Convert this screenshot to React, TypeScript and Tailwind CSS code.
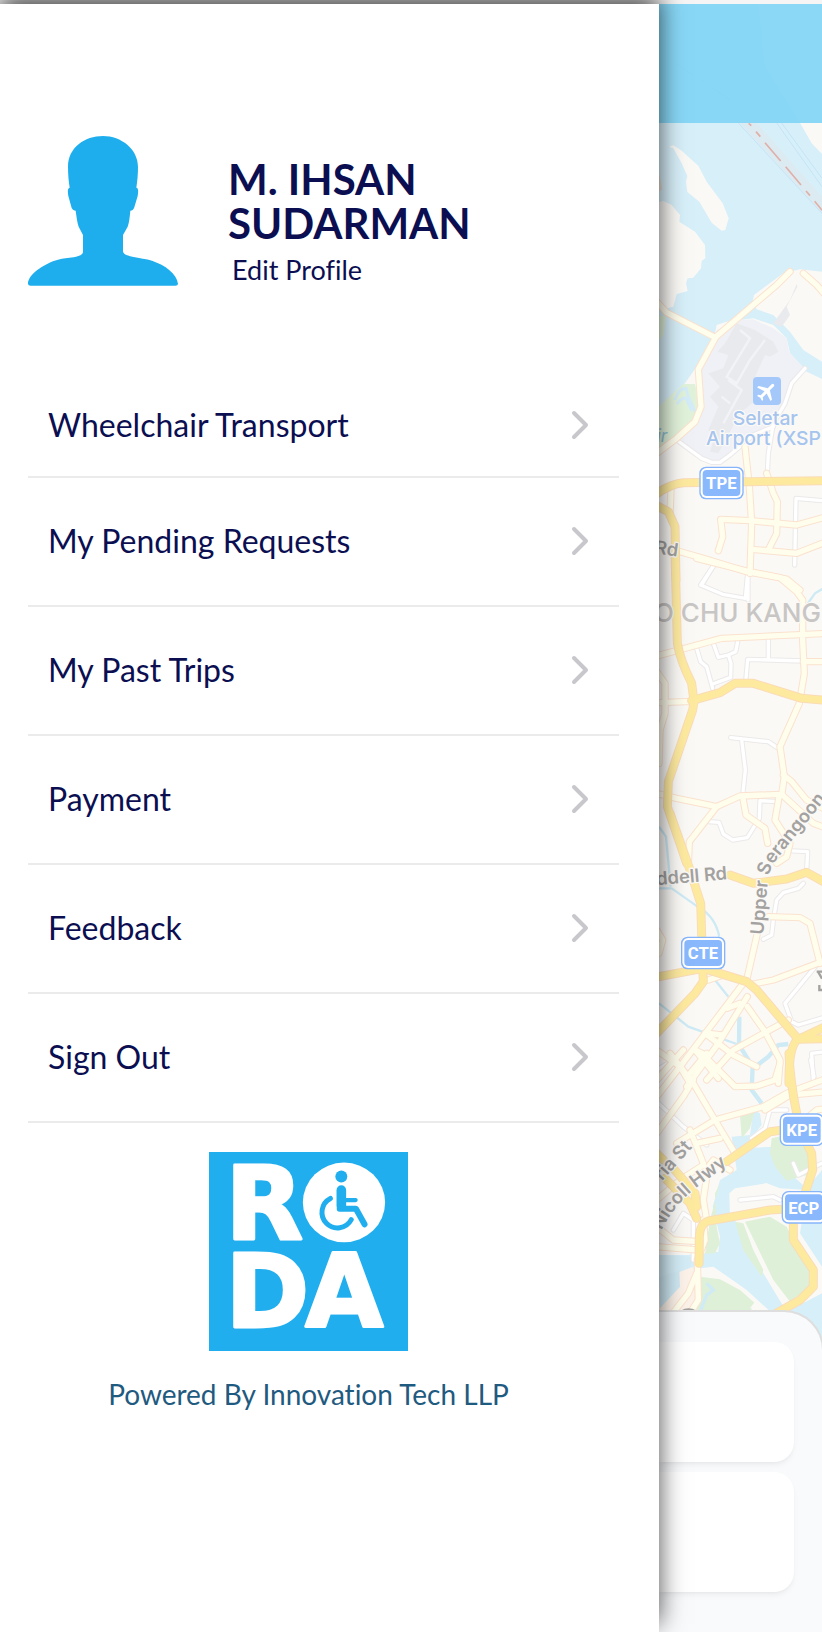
const menuItems = [
  "Wheelchair Transport",
  "My Pending Requests",
  "My Past Trips",
  "Payment",
  "Feedback",
  "Sign Out",
];

type Kind = "minor" | "local" | "highway";

// Roads are kept in tiles, each with its own vertical origin in map units
const tiles: { y: number; roads: [Kind, string][] }[] = [
  {
    y: 840,
    roads: [
      ["minor", "M110 480L185 535 215 547 240 547 270 525 340 465 400 440"],
      ["minor", "M495 265L455 310 435 370 400 430 385 520 382 580"],
      ["minor", "M464 855L468 655 546 662"],
      ["minor", "M222 855L185 915"],
      ["minor", "M324 870V960"],
      ["local", "M50 65L80 98 225 172"],
      ["local", "M450 -25L410 15 228 170 175 268 183 380 165 425 110 475 50 520"],
      ["local", "M490 -20L530 15 560 50"],
      ["local", "M315 500L328 620 335 730 330 880"],
      ["local", "M380 580L400 640 412 665 410 760 385 810"],
      ["local", "M235 812L248 770 242 718 330 722 470 735 560 710"],
      ["local", "M335 808L470 820 560 785"],
      ["local", "M110 812L200 838 320 875 440 897 480 930"],
      ["local", "M90 700L93 625"],
      ["highway", "M40 650Q85 612 130 608L560 602"],
      ["highway", "M40 672L85 695 105 740 108 900"],
    ],
  },
  {
    y: 1680,
    roads: [
      ["minor", "M222 15L182 75 248 103 316 115 324 30"],
      ["minor", "M170 265L182 305 200 320 218 385"],
      ["minor", "M218 372L272 352 273 310 265 285 235 292 220 250M265 285L287 275 293 245"],
      ["minor", "M318 355L323 298 490 303M385 300V240"],
      ["minor", "M272 533L385 545 415 565M305 540L316 630 308 705"],
      ["minor", "M205 785L237 787 250 822 278 840 322 833 358 775 360 722 410 725"],
      ["minor", "M440 872L503 875 500 930"],
      ["local", "M170 -5L320 33 420 53 470 95 488 120 488 240 493 340 478 430 420 560 433 650 425 705"],
      ["local", "M50 288L245 235 560 220"],
      ["local", "M490 305H560"],
      ["local", "M50 428L160 424M50 335L75 370 75 460 60 510 57 610"],
      ["local", "M50 700L110 715 230 740 300 708 425 703 520 790 560 805"],
      ["local", "M430 645L455 665 500 720 550 745"],
      ["local", "M230 740L148 845 145 910"],
      ["local", "M308 710L318 765 375 805 383 850"],
      ["local", "M418 705L405 780 450 850 440 890 410 910"],
      ["highway", "M105 -20L112 250Q120 300 155 370L162 425 158 450 85 665 82 740 140 910"],
      ["highway", "M155 422L240 398 285 370 340 370 485 415 560 421"],
    ],
  },
  {
    y: 2460,
    roads: [
      ["minor", "M490 190L475 205 430 218 410 240 400 300 395 345 370 358"],
      ["minor", "M530 435L435 550 455 605 475 615 560 590"],
      ["minor", "M560 695L515 700 520 780"],
      ["local", "M385 290L480 293 510 310 540 430"],
      ["local", "M352 340L320 480"],
      ["local", "M340 492L400 480 560 420"],
      ["local", "M205 480L250 465M50 330L68 360 57 400"],
      ["local", "M310 490L120 740 50 830"],
      ["local", "M322 530L235 670 140 800"],
      ["local", "M262 565L300 550M205 640L245 645M165 690L205 710"],
      ["local", "M50 690L120 740 150 790M195 640L280 705 350 740"],
      ["local", "M445 600L380 635 280 690 200 780"],
      ["local", "M322 560L375 635 420 720 415 790"],
      ["local", "M165 690L235 775"],
      ["highway", "M90 -20L150 150 182 250 188 440 190 485 165 520 40 650"],
      ["highway", "M40 473L190 445 320 485 350 510 475 658 560 656"],
      ["highway", "M270 165L340 190 440 177 500 157 560 190"],
      ["highway", "M475 658L560 618M475 655Q445 680 447 790"],
    ],
  },
  {
    y: 3180,
    roads: [
      ["minor", "M40 115L130 200 200 255"],
      ["minor", "M50 30L100 0M335 235L375 205 390 150 440 150M460 310L475 345 545 310"],
      ["minor", "M300 420L400 410 420 420M100 510L130 460 160 480 160 600"],
      ["minor", "M512 0L522 50"],
      ["local", "M90 -20L160 70 225 180 285 280"],
      ["local", "M160 60L130 110 50 220M130 -30L50 60"],
      ["local", "M200 -20L150 40M185 -20L285 80 350 78 405 60 420 10"],
      ["local", "M110 250L225 180 370 140 440 100 560 55"],
      ["local", "M375 150L450 105 560 95M500 175L530 150 560 145"],
      ["local", "M150 210L190 310M170 250L240 235M50 420L120 360 190 315"],
      ["local", "M50 500L100 540 180 545M50 560L175 570M190 340L220 300 270 330M200 350L190 420 200 480"],
      ["local", "M190 480L195 540 172 600 175 720 130 790"],
      ["local", "M170 640L145 700 90 770"],
      ["highway", "M447 -20Q450 60 470 160L475 200 515 280 518 330 495 400 460 480 460 540 520 630 520 680 480 720 400 765"],
      ["highway", "M260 305L390 215 430 210"],
      ["highway", "M440 447L390 450 205 483Q180 490 178 530L177 610"],
      ["highway", "M75 355L150 430 170 475M100 325L165 400 170 440M50 280L70 300"],
    ],
  },
];

const styles = {
  minor: { casing: "#ebe9e9", fill: "#ffffff", width: 10 },
  local: { casing: "#fae2cf", fill: "#fffdec", width: 16 },
  highway: { casing: "#fadcb6", fill: "#feea9f", width: 21 },
};

const kinds: Kind[] = ["minor", "local", "highway"];

function Roads({ kind, casing }: { kind: Kind; casing: boolean }) {
  const style = styles[kind];
  return (
    <g
      fill="none"
      stroke={casing ? style.casing : style.fill}
      strokeWidth={casing ? style.width + 6 : style.width}
      strokeLinecap="round"
      strokeLinejoin="round"
    >
      {tiles.map((tile) => (
        <g key={tile.y} transform={`translate(0 ${tile.y})`}>
          {tile.roads
            .filter(([k]) => k === kind)
            .map(([, d]) => (
              <path key={d} d={d} />
            ))}
        </g>
      ))}
    </g>
  );
}

function Shield({ x, y, label }: { x: number; y: number; label: string }) {
  return (
    <g transform={`translate(${x} ${y})`}>
      <rect width="133" height="98" rx="20" fill="#86b4fb" />
      <rect x="4" y="4" width="125" height="90" rx="17" fill="#fff" />
      <rect x="10" y="10" width="113" height="78" rx="12" fill="#8ab8fc" />
      <text
        x="66"
        y="68"
        textAnchor="middle"
        fontFamily="Roboto, sans-serif"
        fontWeight="700"
        fontSize="50"
        fill="#fff"
      >
        {label}
      </text>
    </g>
  );
}

function CityMap() {
  return (
    <svg viewBox="57 12 489 4041" className="block h-auto w-full" role="img" aria-label="Map">
      <rect x="57" y="12" width="489" height="4041" fill="#fbf9f6" />

      {/* sea and strait */}
      <path
        fill="#d7eff9"
        d="M57 0H546V815L480 808 430 820 342 885 338 905 350 928 400 945 450 995 490 1050 546 1085V1137L500 1115 450 1060 440 1015 400 975 340 955 260 965 230 975 225 1000 205 1050 135 1150 57 1220Z"
      />
      <g fill="#fbf9f6">
        <path d="M88 440L100 436 125 452 175 497 200 545 248 610 266 655 256 690 245 692 215 668 178 605 142 576 138 545 142 528 125 490 100 445Z" />
        <path d="M57 606L70 603 95 615 120 645 118 665 165 695 195 735 196 775 185 783 183 805 160 833 143 835 138 850 143 873 110 882 100 920 57 930Z" />
        <path d="M355 12L375 200 480 368 515 430 546 462V12Z" />
      </g>
      <path d="M57 520L67 568 57 575Z" fill="#eadfd8" />
      <path d="M300 369L546 640V590L350 369Z" fill="#dcebf2" />
      <path d="M295 369L546 640M410 369L546 560M425 369L546 535" stroke="#c6e3f5" strokeWidth="3" fill="none" />
      <path
        d="M326 370L334 377M348 395L361 410M375 428L422 483M437 500L483 555M498 573L510 587M524 604L546 631"
        stroke="#dfb0a8"
        strokeWidth="5"
      />
      <path d="M105 190L160 225M185 240L195 247M215 262L270 300" stroke="#b3cfdb" strokeWidth="3" />

      {/* airport */}
      <g transform="translate(0 840)">
        <path d="M57 105L78 110 70 165 57 180ZM57 378L130 312 165 312 180 380 165 425 110 475 57 515Z" fill="#e1f2da" />
        <path d="M105 360Q115 325 138 325L145 350 165 395M110 372Q130 350 138 355L155 392" stroke="#d3ecf7" strokeWidth="9" fill="none" />
        <path
          d="M230 150L300 120 340 118 400 145 440 175 447 215 490 262 450 310 420 390 390 430 340 470 300 500 240 545 200 540 140 500 120 475 180 420 188 380 178 300 178 265 220 180Z"
          fill="#eff1f6"
        />
        <g fill="#e9eaed">
          <path d="M290 130L345 150 400 185 415 215 390 230 375 225 345 290 360 350 300 400 235 520 210 515 225 470 205 450 235 380 210 350 240 320 205 280 250 265 265 225 232 215 255 190Z" />
          <path d="M470 12L450 60 400 130 425 140 450 105 440 80 472 20Z" />
        </g>
        <path d="M300 150L330 175 260 290 290 310 330 240 375 180M265 300L305 330 250 430M245 350L270 370" stroke="#f2f3f6" strokeWidth="7" fill="none" />
      </g>

      {/* canals, marina and parks */}
      <g fill="none" stroke="#cdeaf5" strokeWidth="7">
        <path d="M500 1815L525 1780 550 1765M57 2480L78 2510 92 2660M57 2665H95L180 2725Q225 2750 238 2810M225 2940L265 2990M57 3010L145 3080 290 3132" />
        <path d="M298 3050L297 3135 338 3200 335 3270 365 3310M340 3205L385 3170 415 3135 445 3132" strokeWidth="13" />
      </g>
      <g transform="translate(0 3180)">
        <path d="M340 150L360 160 365 195 330 240 300 265 400 260 450 340 500 385 546 330V870H520L380 745 320 690 220 620 57 640V585H140L235 575 240 530 218 440 240 360 290 330 275 230 330 225Z" fill="#d7eff9" />
        <path d="M57 585L160 590 140 650 110 700 57 780Z" fill="#d3ecf6" />
        <path d="M290 390L380 370 420 385 500 390 480 520 546 620V520 700L440 755 370 640 320 560 285 480Z" fill="#fbf9f6" />
        <path d="M268 400L285 385 380 370 425 400 425 450 320 460 270 480Z" fill="#fbf9f6" />
        <path d="M57 650L120 635 160 620 175 750H57Z" fill="#fcf2e9" />
        <path d="M57 650L118 632 120 680 60 745Z" fill="#cfe9f4" />
        <path
          d="M300 165L345 150 330 205 305 235ZM395 235L480 215 510 290 500 345 440 362 405 320 390 280ZM285 485L310 490 340 570 370 630 365 650 310 570ZM315 485L390 470 440 500 470 560 510 635 510 680 450 725 400 660ZM180 650L240 658 300 690 345 730 330 755H170ZM240 370L225 400 230 500 240 550 225 580 195 582 210 480Z"
          fill="#def0d8"
        />
        <path d="M200 670L220 690 200 705 180 755" stroke="#d0ebf6" strokeWidth="10" fill="none" />
        <path d="M330 745L345 725 375 750Z" fill="#fbf9f6" />
      </g>

      {kinds.map((kind) => (
        <g key={kind}>
          <Roads kind={kind} casing />
          <Roads kind={kind} casing={false} />
        </g>
      ))}

      {/* place and road names */}
      <rect x="339" y="1131" width="84" height="84" rx="12" fill="#a5c8fb" />
      <path
        transform="translate(380 1174) rotate(45) scale(3) translate(-11.5 -12)"
        d="M21 16v-2l-8-5V3.500a1.500 1.500 0 0 0-3 0V9l-8 5v2l8-2.500V19l-2 1.500V22l3.500-1 3.500 1v-1.500L13 19v-5.500z"
        fill="#fff"
      />
      <g
        fontFamily="Inter, Roboto, sans-serif"
        fontWeight="600"
        stroke="#fbf9f6"
        strokeWidth="8"
        paintOrder="stroke"
        strokeLinejoin="round"
      >
        <g fill="#a5c4ee" fontSize="58" fontWeight="500">
          <text x="278" y="1275">Seletar</text>
          <text x="198" y="1335">Airport (XSP</text>
        </g>
        <text x="42" y="1866" fill="#c8c6c4" fontSize="78" fontWeight="500">
          O CHU KANG
        </text>
        <g fill="#a3a2a0" fontSize="55">
          <text transform="translate(43 1660) rotate(8)">Rd</text>
          <text transform="translate(50 2656) rotate(-5)">ddell Rd</text>
          <text transform="translate(66 3544) rotate(-48)">ria St</text>
          <path id="serangoon" d="M370 2805L382 2660Q384 2610 412 2575L600 2345" fill="none" stroke="none" />
          <text>
            <textPath href="#serangoon">Upper Serangoon</textPath>
          </text>
          <path id="nicoll" d="M64 3692Q100 3620 160 3570L300 3465" fill="none" stroke="none" />
          <text>
            <textPath href="#nicoll">Nicoll Hwy</textPath>
          </text>
        </g>
      </g>
      <text x="50" y="1325" fill="#8fc3d8" fontSize="52" fontStyle="italic" fontFamily="Inter, sans-serif">
        ir
      </text>
      <path d="M530 2915H546M534 2915L546 2936M538 2955V2970H546" stroke="#a3a2a0" strokeWidth="7" fill="none" />
      <path d="M122 3932Q145 3918 170 3932Z" fill="#a3a2a0" />

      <Shield x={178} y={1400} label="TPE" />
      <Shield x={123} y={2810} label="CTE" />
      <Shield x={419} y={3340} label="KPE" />
      <Shield x={425} y={3573} label="ECP" />
    </svg>
  );
}

function Avatar() {
  return (
    <svg viewBox="0 0 450 450" className="w-[150px] shrink-0" fill="#1faeed" aria-hidden="true">
      <path d="M225 0C170 0 120 35 120 92C120 115 122 135 125 155C118 156 119 170 121 180L131 216C134 222 138 224 143 224C146 245 148 262 152 272L165 297V348C165 356 150 362 137 364C110 366 90 370 75 376C35 392 0 420 0 443Q0 449 8 449H442Q450 449 450 443C446 412 412 388 372 374C355 369 335 366 313 362C300 359 285 356 285 345V297L299 272C303 262 305 245 307 224C312 224 316 222 319 214L329 180C331 168 332 156 325 155C328 135 330 115 330 92C330 40 280 0 225 0Z" />
    </svg>
  );
}

function Logo() {
  return (
    <svg viewBox="0 0 600 600" className="w-[199px]" role="img" aria-label="RODA">
      <rect width="600" height="600" fill="#21aeee" />
      <g
        fill="#fff"
        stroke="#fff"
        strokeWidth="9"
        strokeLinejoin="round"
        fontFamily="'DejaVu Sans', sans-serif"
        fontWeight="700"
        fontSize="304"
      >
        <text x="50" y="263">R</text>
        <text x="50" y="529">D</text>
        <text x="290" y="529">A</text>
      </g>
      <ellipse cx="407" cy="152" rx="124" ry="120" fill="#fff" />
      <circle cx="399" cy="74" r="18" fill="#21aeee" />
      <g fill="none" stroke="#21aeee" strokeLinecap="round" strokeLinejoin="round">
        <path d="M399 115V163" strokeWidth="29" />
        <path d="M394 171H443L469 218" strokeWidth="18" />
        <path d="M405 145H442" strokeWidth="13" />
        <path d="M366 140A47 47 0 1 0 429 204" strokeWidth="15" />
      </g>
    </svg>
  );
}

function Chevron() {
  return (
    <svg viewBox="0 0 18 30" className="h-[30px] w-[18px] shrink-0" aria-hidden="true">
      <path d="M3 3L15 15 3 27" fill="none" stroke="#c7c7cc" strokeWidth="4" strokeLinecap="round" strokeLinejoin="round" />
    </svg>
  );
}

export default function App() {
  return (
    <div className="flex min-h-screen overflow-hidden bg-[#f5f5f5] pt-1 font-['Lato',sans-serif] text-[#0b0f52] [font-variant-ligatures:none]">
      <aside className="relative z-10 flex-1 bg-white pr-10 pl-7 shadow-[0_-8px_24px_rgba(0,0,0,0.7)]">
        <div className="flex items-start gap-[50px] pt-[132px]">
          <Avatar />
          <div className="pt-[21px]">
            <h1 className="max-w-[280px] text-[42px] leading-[44px] font-bold">M. IHSAN SUDARMAN</h1>
            <a href="#profile" className="ml-1 block text-[27px] leading-[50px]">
              Edit Profile
            </a>
          </div>
        </div>

        <nav className="mt-[79px]">
          <ul>
            {menuItems.map((item) => (
              <li key={item} className="group border-b-2 border-[#ebebeb]">
                <button
                  type="button"
                  className="flex h-[127px] w-full items-center justify-between pr-[30px] pb-0.5 pl-5 text-left text-[32px] group-first:h-[102px] group-first:pb-0"
                >
                  {item}
                  <Chevron />
                </button>
              </li>
            ))}
          </ul>
        </nav>

        <footer className="mr-[30px] flex flex-col items-center pt-[29px]">
          <Logo />
          <p className="mt-6 text-[28px] leading-[38px] text-[#1f5a80]">Powered By Innovation Tech LLP</p>
        </footer>
      </aside>

      <main className="relative flex w-[163px] shrink-0 flex-col">
        <header className="absolute inset-x-0 top-0 h-[119px] bg-[#82d5f5]/93" />
        <CityMap />
        <section className="relative -mt-[41px] -mr-0.5 flex flex-1 flex-col gap-[10px] rounded-tr-[40px] border-t-2 border-r-2 border-[#dedede] bg-[#f9fafc] pt-[30px] pr-7">
          <div className="h-[120px] rounded-r-[20px] bg-white shadow-md shadow-black/5" />
          <div className="h-[120px] rounded-r-[20px] bg-white shadow-md shadow-black/5" />
        </section>
      </main>
    </div>
  );
}
